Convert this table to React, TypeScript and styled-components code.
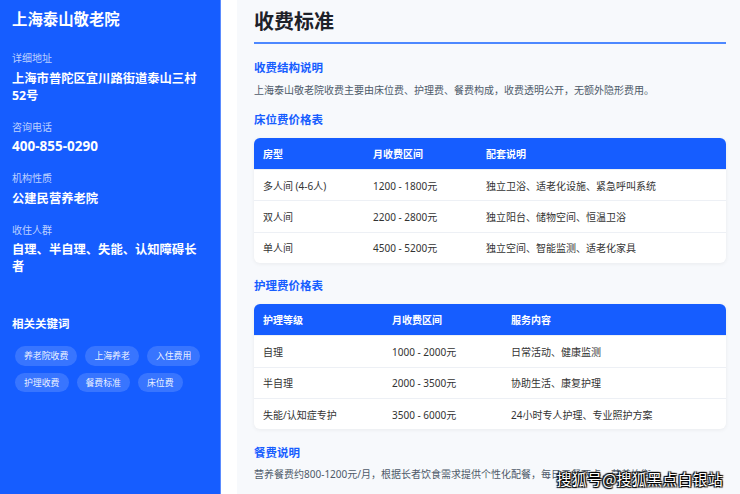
import React from "react";
import styled, { createGlobalStyle } from "styled-components";

const GlobalStyle = createGlobalStyle`
  html, body {
    margin: 0;
    padding: 0;
    height: 100%;
    overflow: hidden;
  }
  body {
    font-family: "Noto Sans", "Noto Sans CJK SC", sans-serif;
    color: #1d2129;
  }
  #root { height: 100%; }
  * { box-sizing: border-box; }
`;

const Page = styled.div`
  display: flex;
  height: 100vh;
  position: relative;
  background: #ffffff;
`;

const Sidebar = styled.aside`
  flex: none;
  width: 221px;
  height: 100%;
  background: #165dff;
  border-right: 1px solid #5a8bff;
  padding: 9px 16px 0 12px;
  color: #ffffff;
`;

const SiteTitle = styled.h1`
  margin: 0 0 20px;
  font-size: 15.4px;
  line-height: 22px;
  font-weight: 700;
`;

const InfoGroup = styled.div`
  margin-bottom: 16px;
`;

const InfoLabel = styled.div`
  font-size: 10px;
  line-height: 14px;
  color: rgba(255, 255, 255, 0.72);
  margin-bottom: 4.5px;
`;

const InfoValue = styled.div<{ $size?: number }>`
  font-size: ${(p) => p.$size ?? 12.3}px;
  line-height: 17px;
  font-weight: 700;
`;

const Keywords = styled.div`
  margin-top: 41px;
`;

const KeywordsTitle = styled.div`
  font-size: 11.5px;
  line-height: 16px;
  font-weight: 700;
`;

const TagList = styled.div`
  display: flex;
  flex-wrap: wrap;
  gap: 7px 8px;
  margin-top: 14px;
  padding-left: 3px;
`;

const Tag = styled.span`
  display: inline-block;
  height: 19.5px;
  line-height: 19.5px;
  padding: 0 9px;
  border-radius: 10px;
  font-size: 8.9px;
  background: rgba(255, 255, 255, 0.15);
  color: rgba(255, 255, 255, 0.92);
`;

const Main = styled.main`
  flex: 1;
  min-width: 0;
  height: 100%;
  padding-left: 16px;
`;

const Panel = styled.div`
  height: 100%;
  background: #f7f9fc;
  padding: 0 14px 0 17px;
  overflow: hidden;
`;

const PageHeading = styled.h2`
  margin: 8px 0 0;
  font-size: 20px;
  line-height: 28px;
  font-weight: 700;
  color: #1d2129;
  padding-bottom: 6px;
  border-bottom: 2px solid #4d88ff;
`;

const Section = styled.section<{ $top: number }>`
  margin-top: ${(p) => p.$top}px;
`;

const SubTitle = styled.h3<{ $gap: number }>`
  margin: 0 0 ${(p) => p.$gap}px;
  font-size: 11.5px;
  line-height: 16px;
  font-weight: 700;
  color: #165dff;
`;

const Paragraph = styled.p`
  margin: 0;
  font-size: 10px;
  line-height: 16px;
  color: #4e5969;
  white-space: nowrap;
`;

const PriceTable = styled.table`
  width: 100%;
  table-layout: fixed;
  border-collapse: separate;
  border-spacing: 0;
  background: #ffffff;
  border-radius: 6px;
  overflow: hidden;
  box-shadow: 0 1px 4px rgba(0, 0, 0, 0.06);
`;

const HeadCell = styled.th`
  height: 31px;
  padding: 0 9px;
  background: #165dff;
  color: #ffffff;
  font-size: 10px;
  font-weight: 700;
  text-align: left;
`;

const Cell = styled.td`
  height: 31.4px;
  padding: 0 9px;
  border-top: 1px solid #edf0f5;
  font-size: 10px;
  color: #333333;
  white-space: nowrap;
`;

const Watermark = styled.div`
  position: absolute;
  right: 17px;
  bottom: 5px;
  font-size: 15px;
  line-height: 20px;
  font-family: "Noto Sans CJK SC", sans-serif;
  color: #ffffff;
  text-shadow: 0 0 1px #000, 1px 1px 1px #000, -1px -1px 1px #000, 1px -1px 1px #000,
    -1px 1px 1px #000;
  letter-spacing: 0.2px;
`;

type TableData = {
  widths: number[];
  head: string[];
  rows: string[][];
};

const bedTable: TableData = {
  widths: [110, 113, 249],
  head: ["房型", "月收费区间", "配套说明"],
  rows: [
    ["多人间 (4-6人)", "1200 - 1800元", "独立卫浴、适老化设施、紧急呼叫系统"],
    ["双人间", "2200 - 2800元", "独立阳台、储物空间、恒温卫浴"],
    ["单人间", "4500 - 5200元", "独立空间、智能监测、适老化家具"],
  ],
};

const careTable: TableData = {
  widths: [129, 119, 224],
  head: ["护理等级", "月收费区间", "服务内容"],
  rows: [
    ["自理", "1000 - 2000元", "日常活动、健康监测"],
    ["半自理", "2000 - 3500元", "协助生活、康复护理"],
    ["失能/认知症专护", "3500 - 6000元", "24小时专人护理、专业照护方案"],
  ],
};

function Table({ data }: { data: TableData }) {
  return (
    <PriceTable>
      <colgroup>
        {data.widths.map((w, i) => (
          <col key={i} style={{ width: w }} />
        ))}
      </colgroup>
      <thead>
        <tr>
          {data.head.map((h) => (
            <HeadCell key={h}>{h}</HeadCell>
          ))}
        </tr>
      </thead>
      <tbody>
        {data.rows.map((r, i) => (
          <tr key={i}>
            {r.map((c, j) => (
              <Cell key={j}>{c}</Cell>
            ))}
          </tr>
        ))}
      </tbody>
    </PriceTable>
  );
}

const keywords = ["养老院收费", "上海养老", "入住费用", "护理收费", "餐费标准", "床位费"];

export default function App() {
  return (
    <>
      <GlobalStyle />
      <Page>
        <Sidebar>
          <SiteTitle>上海泰山敬老院</SiteTitle>
          <InfoGroup>
            <InfoLabel>详细地址</InfoLabel>
            <InfoValue>上海市普陀区宜川路街道泰山三村52号</InfoValue>
          </InfoGroup>
          <InfoGroup>
            <InfoLabel>咨询电话</InfoLabel>
            <InfoValue $size={13.5}>400-855-0290</InfoValue>
          </InfoGroup>
          <InfoGroup>
            <InfoLabel>机构性质</InfoLabel>
            <InfoValue>公建民营养老院</InfoValue>
          </InfoGroup>
          <InfoGroup>
            <InfoLabel>收住人群</InfoLabel>
            <InfoValue>自理、半自理、失能、认知障碍长者</InfoValue>
          </InfoGroup>
          <Keywords>
            <KeywordsTitle>相关关键词</KeywordsTitle>
            <TagList>
              {keywords.map((k) => (
                <Tag key={k}>{k}</Tag>
              ))}
            </TagList>
          </Keywords>
        </Sidebar>
        <Main>
          <Panel>
            <PageHeading>收费标准</PageHeading>
            <Section $top={16}>
              <SubTitle $gap={6}>收费结构说明</SubTitle>
              <Paragraph>
                上海泰山敬老院收费主要由床位费、护理费、餐费构成，收费透明公开，无额外隐形费用。
              </Paragraph>
            </Section>
            <Section $top={14}>
              <SubTitle $gap={10}>床位费价格表</SubTitle>
              <Table data={bedTable} />
            </Section>
            <Section $top={15}>
              <SubTitle $gap={10}>护理费价格表</SubTitle>
              <Table data={careTable} />
            </Section>
            <Section $top={16}>
              <SubTitle $gap={5}>餐费说明</SubTitle>
              <Paragraph>
                营养餐费约800-1200元/月，根据长者饮食需求提供个性化配餐，每日三餐两点，营养均衡。
              </Paragraph>
            </Section>
          </Panel>
        </Main>
        <Watermark>搜狐号@搜狐黑点白银站</Watermark>
      </Page>
    </>
  );
}
